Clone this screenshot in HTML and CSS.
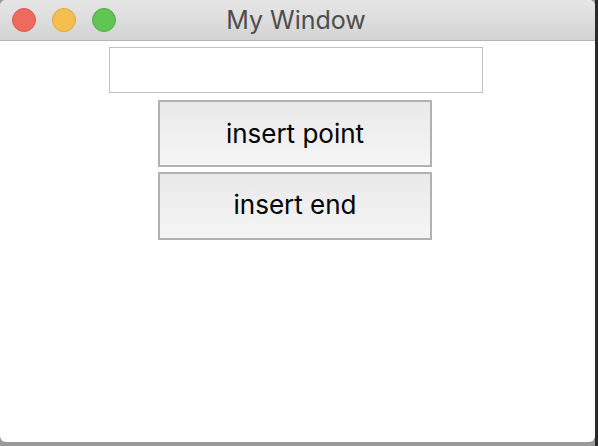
FILE: index.html
```html
<!DOCTYPE html>
<html>
<head>
<meta charset="utf-8">
<link rel="stylesheet" href="styles.css">
</head>
<body>
<div class="window">
  <div class="titlebar">
    <div class="lights">
      <span class="light red"></span>
      <span class="light yellow"></span>
      <span class="light green"></span>
    </div>
    <div class="title">My Window</div>
  </div>
  <div class="content">
    <div class="entry"></div>
    <div class="btn">insert point</div>
    <div class="btn btn2">insert end</div>
  </div>
</div>
</body>
</html>
```
FILE: styles.css
```css
html, body {
  margin: 0;
  padding: 0;
  width: 598px;
  height: 446px;
  overflow: hidden;
  background: linear-gradient(to right, #9a9a9a 0, #9a9a9a 595px, #2a2a2a 595px);
}
.window {
  width: 595px;
  height: 442px;
  background: #ffffff;
  border-radius: 6px;
  overflow: hidden;
  display: flex;
  flex-direction: column;
  font-family: Inter, "Noto Sans", "Liberation Sans", sans-serif;
}
.titlebar {
  height: 40px;
  border-bottom: 1px solid #b4b4b4;
  background: linear-gradient(to bottom, #e6e6e6, #d3d3d3);
  display: flex;
  align-items: center;
  position: relative;
  flex-shrink: 0;
}
.lights {
  display: flex;
  gap: 16px;
  padding-left: 12px;
}
.light {
  width: 22px;
  height: 22px;
  border-radius: 50%;
  display: block;
}
.red { background: #ee6a5e; border: 1px solid #d85a4e; }
.yellow { background: #f5bf4f; border: 1px solid #dca63e; }
.green { background: #61c554; border: 1px solid #52aa45; }
.title {
  position: absolute;
  left: 0;
  right: 0;
  top: 0;
  height: 40px;
  line-height: 40px;
  text-align: center;
  font-size: 25px;
  color: #4d4d4d;
  padding-right: 3px;
}
.content {
  display: flex;
  flex-direction: column;
  align-items: center;
  padding-top: 6px;
}
.entry {
  width: 372px;
  height: 44px;
  border: 1px solid #c2c2c2;
  margin-right: 3px;
}
.btn {
  margin-top: 7px;
  width: 270px;
  height: 63px;
  border: 2px solid #b1b1b1;
  background: linear-gradient(to bottom, #e9e9e9, #f5f5f5);
  display: flex;
  align-items: center;
  justify-content: center;
  font-size: 26px;
  color: #000;
  margin-right: 5px;
}
.btn2 {
  margin-top: 5px;
  height: 61px;
  padding-bottom: 3px;
}
```
